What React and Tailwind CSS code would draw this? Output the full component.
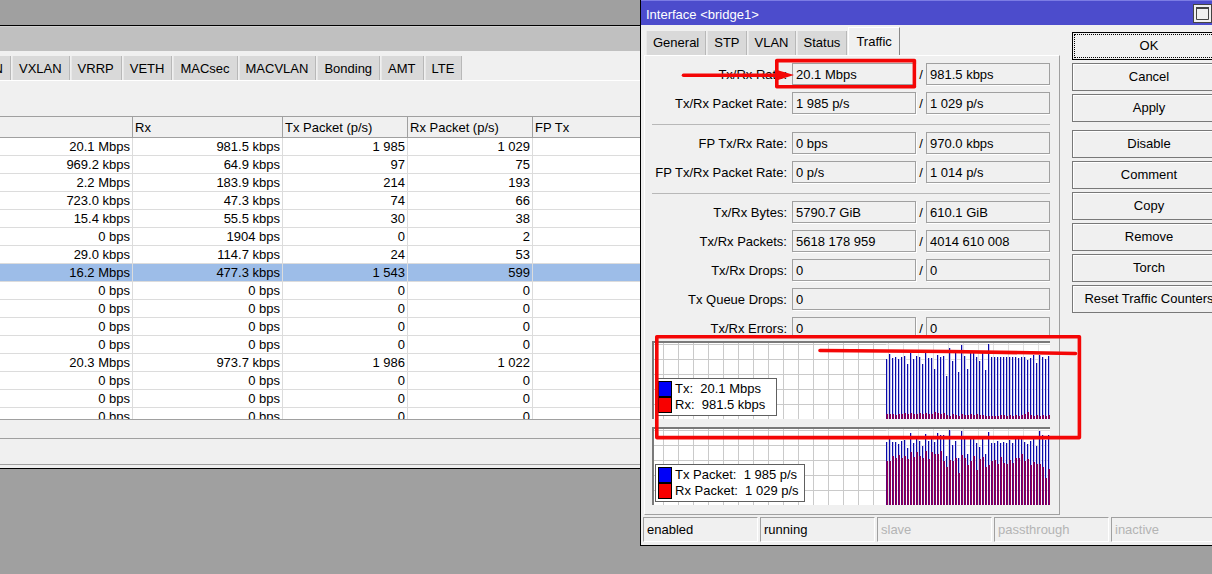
import React from "react";

const listTabs = ["VLAN", "VXLAN", "VRRP", "VETH", "MACsec", "MACVLAN", "Bonding", "AMT", "LTE"];

const rows = [
  ["20.1 Mbps", "981.5 kbps", "1 985", "1 029"],
  ["969.2 kbps", "64.9 kbps", "97", "75"],
  ["2.2 Mbps", "183.9 kbps", "214", "193"],
  ["723.0 kbps", "47.3 kbps", "74", "66"],
  ["15.4 kbps", "55.5 kbps", "30", "38"],
  ["0 bps", "1904 bps", "0", "2"],
  ["29.0 kbps", "114.7 kbps", "24", "53"],
  ["16.2 Mbps", "477.3 kbps", "1 543", "599"],
  ["0 bps", "0 bps", "0", "0"],
  ["0 bps", "0 bps", "0", "0"],
  ["0 bps", "0 bps", "0", "0"],
  ["0 bps", "0 bps", "0", "0"],
  ["20.3 Mbps", "973.7 kbps", "1 986", "1 022"],
  ["0 bps", "0 bps", "0", "0"],
  ["0 bps", "0 bps", "0", "0"],
  ["0 bps", "0 bps", "0", "0"],
];
const selectedRow = 7;

const fieldGroups = [
  [
    ["Tx/Rx Rate:", "20.1 Mbps", "981.5 kbps"],
    ["Tx/Rx Packet Rate:", "1 985 p/s", "1 029 p/s"],
  ],
  [
    ["FP Tx/Rx Rate:", "0 bps", "970.0 kbps"],
    ["FP Tx/Rx Packet Rate:", "0 p/s", "1 014 p/s"],
  ],
  [
    ["Tx/Rx Bytes:", "5790.7 GiB", "610.1 GiB"],
    ["Tx/Rx Packets:", "5618 178 959", "4014 610 008"],
    ["Tx/Rx Drops:", "0", "0"],
    ["Tx Queue Drops:", "0"],
    ["Tx/Rx Errors:", "0", "0"],
  ],
];

const actionGroups = [
  ["OK", "Cancel", "Apply"],
  ["Disable", "Comment", "Copy", "Remove", "Torch", "Reset Traffic Counters"],
];

const states = [
  ["enabled", true],
  ["running", true],
  ["slave", false],
  ["passthrough", false],
  ["inactive", false],
];

// Sample heights in pixels, oldest first.
const rateTx = [60, 65, 61, 62, 60, 62, 63, 55, 66, 60, 63, 62, 55, 66, 61, 61, 50, 64, 62, 63, 43, 71, 58, 66, 47, 74, 63, 50, 66, 66, 62, 58, 66, 49, 75, 62, 62, 62, 62, 62, 62, 62, 62, 62, 61, 62, 62, 59, 61, 64, 56, 64, 62, 60, 63];
const rateRx = [5, 5, 5, 4, 5, 5, 6, 5, 6, 5, 5, 6, 5, 6, 5, 5, 7, 6, 5, 6, 4, 3, 5, 4, 3, 5, 4, 4, 5, 4, 5, 4, 4, 3, 3, 3, 3, 3, 4, 4, 3, 4, 3, 4, 3, 4, 5, 7, 4, 3, 4, 3, 4, 3, 4];
const packetTx = [63, 67, 63, 63, 61, 64, 65, 57, 72, 62, 67, 64, 59, 71, 64, 67, 63, 72, 70, 70, 49, 75, 60, 64, 47, 74, 67, 51, 67, 67, 62, 58, 67, 51, 73, 62, 62, 64, 62, 63, 62, 65, 62, 66, 66, 66, 63, 61, 64, 67, 59, 74, 70, 65, 70];
const packetRx = [44, 44, 49, 47, 50, 47, 49, 46, 53, 48, 53, 49, 47, 54, 46, 53, 51, 51, 54, 44, 38, 45, 44, 47, 32, 50, 47, 40, 44, 49, 35, 46, 48, 38, 40, 44, 45, 41, 48, 42, 41, 45, 42, 47, 47, 51, 44, 46, 40, 43, 41, 41, 38, 27, 36];

function Tab({ label, active, wide }) {
  const look = active
    ? "h-7 border-l-white border-r-[#888] border-t border-t-white bg-[#f0f0f0] px-[7px]"
    : "h-6 border-l-[#e8e8e8] border-r-[#b8b8b8] bg-[#d9d9d9] " + (wide ? "pl-[6px] pr-[7px] pt-0.5" : "px-[6px]");
  return (
    <button type="button" role="tab" aria-selected={!!active} className={"border-l border-r " + look}>
      {label}
    </button>
  );
}

function InterfaceList() {
  return (
    <section className="mt-[25px] min-w-0 flex-1 overflow-hidden border-b border-t border-black bg-[#f0f0f0]">
      <div className="h-[25px] border-t border-[#d0d0d0] bg-[#c0c0c0]" />
      <div role="tablist" className="-ml-[38px] flex items-end gap-px pt-[5px]">
        {listTabs.map((t) => (
          <Tab key={t} label={t} wide />
        ))}
      </div>
      <div className="h-px bg-white" />
      <div className="mt-[35px] h-[304px] overflow-hidden border-b border-t border-[#a0a0a0] bg-white">
        <table className="w-full table-fixed border-separate border-spacing-0">
          <colgroup>
            <col className="w-[133px]" />
            <col className="w-[150px]" />
            <col className="w-[125px]" />
            <col className="w-[125px]" />
            <col />
          </colgroup>
          <thead>
            <tr>
              {["", "Rx", "Tx Packet (p/s)", "Rx Packet (p/s)", "FP Tx"].map((h) => (
                <th
                  key={h}
                  scope="col"
                  className="h-[21px] border-b border-r border-[#a0a0a0] bg-[#f0f0f0] px-0.5 pb-0 pt-0.5 text-left font-normal last:border-r-0"
                >
                  {h}
                </th>
              ))}
            </tr>
          </thead>
          <tbody>
            {rows.map((r, i) => (
              <tr key={i} className={i === selectedRow ? "bg-[#9dbde8]" : "bg-white"}>
                {r.map((v, j) => (
                  <td key={j} className="h-[18px] border-b border-r border-[#dcdcdc] px-0.5 py-0 text-right leading-[17px]">
                    {v}
                  </td>
                ))}
                <td className="border-b border-[#dcdcdc] p-0" />
              </tr>
            ))}
          </tbody>
        </table>
      </div>
      <div className="h-[19px] border-b border-[#a0a0a0]" />
      <div className="h-[26px] border-b border-[#a0a0a0]" />
      <div className="h-[3px]" />
    </section>
  );
}

function Value({ id, label, value, grow }) {
  return (
    <input
      id={id}
      aria-label={label}
      readOnly
      defaultValue={value}
      className={
        (grow ? "min-w-0 flex-1" : "w-[124px]") +
        " h-[22px] rounded-none border border-[#a0a0a0] bg-[#f0f0f0] px-[3px] shadow-[1px_1px_0_#fff] outline-none"
      }
    />
  );
}

function Field({ id, field }) {
  const [label, tx, rx] = field;
  return (
    <div className="flex items-center">
      <label htmlFor={id} className="w-[140px] whitespace-nowrap pr-[5px] pt-0.5 text-right">
        {label}
      </label>
      <Value id={id} value={tx} grow={rx === undefined} />
      {rx !== undefined && (
        <>
          <span className="w-[10px] pt-0.5 text-center">/</span>
          <Value label={label + " Rx"} value={rx} grow />
        </>
      )}
    </div>
  );
}

function Graph({ id, tx, rx, legend, legendClass }) {
  return (
    <div className="relative h-[78px] border-l-2 border-t-2 border-[#7a7a7a] bg-white">
      <svg className="block h-full w-full" aria-hidden="true">
        <defs>
          <pattern id={id} x="9" y="1" width="15" height="15" patternUnits="userSpaceOnUse">
            <path d="M0 0H15V1H1V15H0Z" fill="#cacaca" />
          </pattern>
        </defs>
        <rect width="100%" height="100%" fill={"url(#" + id + ")"} />
        <rect x="232" width="164" height="76" fill="#fff" fillOpacity="0.4" />
        {tx.map((h, i) => (
          <g key={i} shapeRendering="crispEdges">
            <rect x={232 + i * 3} y={76 - h} width="1" height={h} fill="#0a0aa8" />
            <rect x={233 + i * 3} y={76 - h} width="1" height={h} fill="#c4c4f4" />
            <rect x={232 + i * 3} y={76 - rx[i]} width="1" height={rx[i]} fill="#5c0078" />
            <rect x={233 + i * 3} y={76 - rx[i]} width="1" height={rx[i]} fill="#980050" />
          </g>
        ))}
      </svg>
      <div className={"absolute border border-[#606060] bg-white py-0.5 pl-0.5 pr-[5px] " + legendClass}>
        {legend.map(([name, value], i) => (
          <div key={name} className="flex h-4 items-center gap-[3px] whitespace-pre">
            <span className={(i === 0 ? "bg-[#0000f8]" : "bg-[#f80000]") + " h-4 w-[14px] border border-black"} />
            {name + ":  " + value}
          </div>
        ))}
      </div>
    </div>
  );
}

function InterfaceDialog() {
  return (
    <section className="relative -mr-5 w-[592px] shrink-0 self-start border-b border-l border-black bg-[#f0f0f0]">
      <header className="flex h-[25px] items-center justify-between border-t border-[#7c7ce4] bg-[#4c4ccc] pl-[5px] pr-5 text-white">
        <h1 className="pt-1">Interface &lt;bridge1&gt;</h1>
        <button type="button" aria-label="Maximize" className="h-[19px] w-[19px] border border-[#444] bg-[#f0f0f0] p-0.5">
          <svg viewBox="0 0 13 13" className="h-[13px] w-[13px]" aria-hidden="true">
            <path d="M0.5 1H12.5V12.5H0.5Z" fill="#f0f0f0" stroke="#444" />
            <path d="M0 0H13V2H0Z" fill="#444" />
          </svg>
        </button>
      </header>

      <div className="flex gap-3 pb-0.5 pl-[3px] pt-0.5">
        <div className="w-[416px]">
          <div role="tablist" className="flex items-end gap-px pl-0.5">
            <Tab label="General" />
            <Tab label="STP" />
            <Tab label="VLAN" />
            <Tab label="Status" />
            <Tab label="Traffic" active />
          </div>
          <div className="border-b border-l border-r border-t border-b-[#a0a0a0] border-l-white border-r-[#a0a0a0] border-t-white pb-[9px] pl-[7px] pr-[9px] pt-[7px]">
            <div className="h-[275px] overflow-hidden">
              {fieldGroups.map((g, gi) => (
                <div
                  key={gi}
                  className={"flex flex-col gap-[7px] " + (gi > 0 ? "mt-[10px] border-t border-[#b8b8b8] pt-[7px]" : "")}
                >
                  {g.map((f, fi) => (
                    <Field key={f[0]} id={"field-" + gi + "-" + fi} field={f} />
                  ))}
                </div>
              ))}
            </div>
            <div className="mt-[3px] flex flex-col gap-2">
              <Graph
                id="grid-rate"
                tx={rateTx}
                rx={rateRx}
                legend={[["Tx", "20.1 Mbps"], ["Rx", "981.5 kbps"]]}
                legendClass="left-px top-[35px] w-[122px]"
              />
              <Graph
                id="grid-packet"
                tx={packetTx}
                rx={packetRx}
                legend={[["Tx Packet", "1 985 p/s"], ["Rx Packet", "1 029 p/s"]]}
                legendClass="left-px top-[35px]"
              />
            </div>
          </div>
        </div>

        <div className="flex w-[154px] flex-col gap-2 pt-[5px]">
          {actionGroups.map((g) => (
            <div key={g[0]} className="flex flex-col gap-[3px]">
              {g.map((a) =>
                a === "OK" ? (
                  <button key={a} type="button" className="h-7 border border-black p-px">
                    <span className="flex h-full items-center justify-center border border-dotted border-black">{a}</span>
                  </button>
                ) : (
                  <button
                    key={a}
                    type="button"
                    className="h-7 whitespace-nowrap border border-[#787878] shadow-[inset_1px_1px_0_#fff]"
                  >
                    {a}
                  </button>
                )
              )}
            </div>
          ))}
        </div>
      </div>

      <footer className="flex gap-0.5 pb-[3px] pl-0.5">
        {states.map(([s, on]) => (
          <div
            key={s}
            className={
              "h-[25px] w-[115px] border border-b-white border-l-[#a0a0a0] border-r-white border-t-[#a0a0a0] pl-[3px] leading-[23px] " +
              (on ? "text-black" : "text-[#b4b4b4]")
            }
          >
            {s}
          </div>
        ))}
      </footer>

      <svg
        className="pointer-events-none absolute -left-px top-0 h-full w-full"
        fill="none"
        stroke="#f40606"
        strokeWidth="3.6"
        strokeLinecap="round"
        strokeLinejoin="round"
        aria-hidden="true"
      >
        <rect x="136.8" y="60.6" width="137.6" height="26.2" />
        <path d="M43.5 75.2H140" />
        <path d="M137 70L154 75L138 80Z" fill="#f40606" stroke="none" />
        <rect x="16.8" y="336.8" width="422.6" height="100.8" />
        <path d="M180 350.5L310 351.5L435.5 353.5" />
      </svg>
    </section>
  );
}

export default function App() {
  return (
    <main className="flex min-h-screen items-start overflow-hidden bg-[#a0a0a0] font-['Liberation_Sans',Arial,sans-serif] text-[13px] leading-4 text-black">
      <InterfaceList />
      <InterfaceDialog />
    </main>
  );
}
